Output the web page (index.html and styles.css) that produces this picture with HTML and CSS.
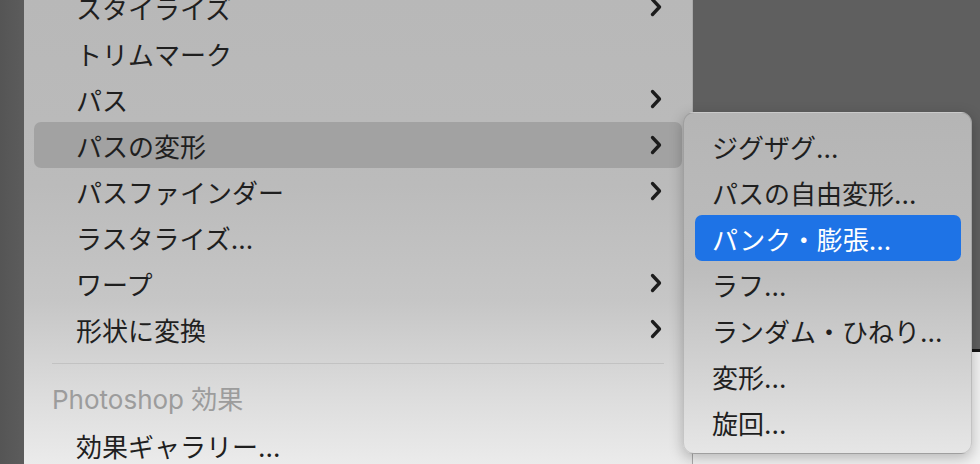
FILE: index.html
```html
<!DOCTYPE html>
<html lang="ja">
<head>
    <meta charset="UTF-8">
    <meta name="viewport" content="width=device-width, initial-scale=1.0">
    <title>効果メニュー</title>
    <link rel="stylesheet" href="styles.css">
</head>
<body>
    <div class="screen">
        <div class="edge"></div>

        <div class="menu">
            <ul class="menu-list">
                <li class="item">スタイライズ<svg class="chev" width="12" height="20" viewBox="0 0 12 20"><path d="M2.5 2.5 L9.5 10 L2.5 17.5"/></svg></li>
                <li class="item">トリムマーク</li>
                <li class="item">パス<svg class="chev" width="12" height="20" viewBox="0 0 12 20"><path d="M2.5 2.5 L9.5 10 L2.5 17.5"/></svg></li>
                <li class="item open">パスの変形<svg class="chev" width="12" height="20" viewBox="0 0 12 20"><path d="M2.5 2.5 L9.5 10 L2.5 17.5"/></svg></li>
                <li class="item">パスファインダー<svg class="chev" width="12" height="20" viewBox="0 0 12 20"><path d="M2.5 2.5 L9.5 10 L2.5 17.5"/></svg></li>
                <li class="item">ラスタライズ…</li>
                <li class="item">ワープ<svg class="chev" width="12" height="20" viewBox="0 0 12 20"><path d="M2.5 2.5 L9.5 10 L2.5 17.5"/></svg></li>
                <li class="item">形状に変換<svg class="chev" width="12" height="20" viewBox="0 0 12 20"><path d="M2.5 2.5 L9.5 10 L2.5 17.5"/></svg></li>
                <li class="sep"></li>
                <li class="header">Photoshop 効果</li>
                <li class="item">効果ギャラリー…</li>
            </ul>
        </div>

        <div class="backdrop">
            <div class="dark"></div>
            <div class="window"></div>
        </div>

        <ul class="submenu">
            <li class="sub-item">ジグザグ…</li>
            <li class="sub-item">パスの自由変形…</li>
            <li class="sub-item active">パンク・膨張…</li>
            <li class="sub-item">ラフ…</li>
            <li class="sub-item">ランダム・ひねり…</li>
            <li class="sub-item">変形…</li>
            <li class="sub-item">旋回…</li>
        </ul>
    </div>
</body>
</html>
```

FILE: styles.css
```css
/* 画面全体 */
body {
  margin: 0;
  background: #5f5f5f;
  font-family: 'Inter', 'Noto Sans CJK JP', sans-serif;
  overflow: hidden;
}

.screen {
  position: relative;
  display: flex;
  width: 980px;
  height: 464px;
  overflow: hidden;
}

.edge {
  width: 24px;
  flex-shrink: 0;
  background: linear-gradient(90deg, #555 0%, #5c5c5c 100%);
}

/* メインメニュー */
.menu {
  width: 669px;
  flex-shrink: 0;
  padding: 0 10px;
  box-sizing: border-box;
  background: linear-gradient(180deg, #b8b8b8 0%, #bbbbbb 40%, #c6c6c6 65%, #dcdcdc 85%, #ebebeb 100%);
  border-right: 1px solid #a9a9a9;
}

.menu-list {
  list-style: none;
  margin: -16px 0 0;
  padding: 0;
}

.item {
  display: flex;
  align-items: center;
  justify-content: space-between;
  height: 46px;
  padding: 0 20px 0 42px;
  border-radius: 7px;
  font-size: 26px;
  color: #1f1f1f;
  white-space: nowrap;
}

.item.open {
  background: rgba(0,0,0,0.13);
}

.chev path {
  fill: none;
  stroke: #1c1c1c;
  stroke-width: 3.3;
  stroke-linecap: round;
  stroke-linejoin: round;
}

.sep {
  height: 1px;
  margin: 11px 18px 12px;
  background: #c2c2c2;
}

.header {
  display: flex;
  align-items: center;
  height: 46px;
  box-sizing: border-box;
  padding: 0 0 4px 18px;
  font-size: 26px;
  color: #9c9c9c;
}

/* 右側の背景 */
.backdrop {
  flex: 1;
  display: flex;
  flex-direction: column;
}

.dark {
  height: 349px;
  background: #5f5f5f;
}

.window {
  flex: 1;
  border-top: 3px solid #151515;
  background: #f2f2f2;
}

/* サブメニュー */
.submenu {
  position: absolute;
  left: 683px;
  top: 112px;
  width: 289px;
  height: 342px;
  margin: 0;
  padding: 10px 10px 10px 11px;
  box-sizing: border-box;
  list-style: none;
  border-radius: 11px;
  background: linear-gradient(180deg, #b5b5b5 0%, #bcbcbc 45%, #d2d2d2 75%, #e6e6e6 100%);
  border: 1px solid rgba(0,0,0,0.12);
  box-shadow: 0 4px 14px rgba(0,0,0,0.25);
}

.sub-item {
  display: flex;
  align-items: center;
  height: 46px;
  padding-left: 17px;
  border-radius: 7px;
  font-size: 26px;
  color: #1f1f1f;
  white-space: nowrap;
}

.sub-item.active {
  background: #1e73e6;
  color: #fff;
}
```
